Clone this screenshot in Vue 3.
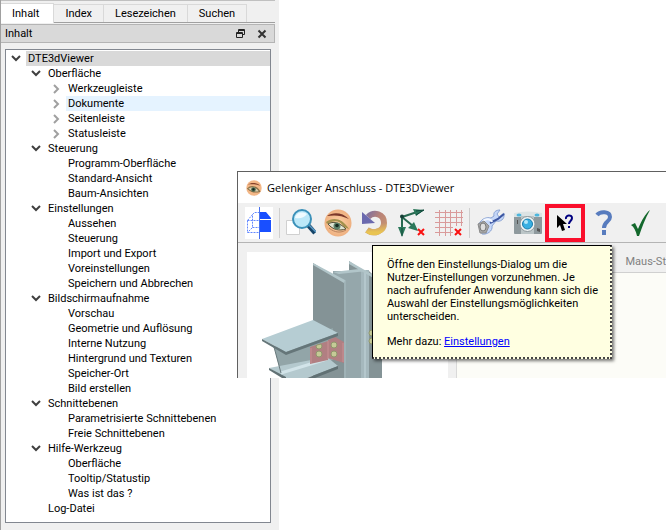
<script setup>
import { ref } from 'vue'

const tabs = ['Inhalt', 'Index', 'Lesezeichen', 'Suchen']
const active = ref(0)

const rows = [
  [0, 'DTE3dViewer', 'open', 'selected'],
  [1, 'Oberfläche', 'open'],
  [2, 'Werkzeugleiste', 'closed'],
  [2, 'Dokumente', 'closed', 'hovered'],
  [2, 'Seitenleiste', 'closed'],
  [2, 'Statusleiste', 'closed'],
  [1, 'Steuerung', 'open'],
  [2, 'Programm-Oberfläche'],
  [2, 'Standard-Ansicht'],
  [2, 'Baum-Ansichten'],
  [1, 'Einstellungen', 'open'],
  [2, 'Aussehen'],
  [2, 'Steuerung'],
  [2, 'Import und Export'],
  [2, 'Voreinstellungen'],
  [2, 'Speichern und Abbrechen'],
  [1, 'Bildschirmaufnahme', 'open'],
  [2, 'Vorschau'],
  [2, 'Geometrie und Auflösung'],
  [2, 'Interne Nutzung'],
  [2, 'Hintergrund und Texturen'],
  [2, 'Speicher-Ort'],
  [2, 'Bild erstellen'],
  [1, 'Schnittebenen', 'open'],
  [2, 'Parametrisierte Schnittebenen'],
  [2, 'Freie Schnittebenen'],
  [1, 'Hilfe-Werkzeug', 'open'],
  [2, 'Oberfläche'],
  [2, 'Tooltip/Statustip'],
  [2, 'Was ist das ?'],
  [1, 'Log-Datei'],
].map(([level, label, state, mark]) => ({ level, label, state, mark }))
</script>

<template>
  <main class="page">
    <aside class="dock">
      <nav class="tabs" role="tablist">
        <button
          v-for="(tab, i) in tabs"
          :key="tab"
          class="tab"
          :class="{ active: active === i }"
          role="tab"
          :aria-selected="active === i"
          @click="active = i"
        >{{ tab }}</button>
      </nav>
      <header class="dock-title">
        <span class="dock-name">Inhalt</span>
        <button class="dock-button" aria-label="Abdocken">
          <svg width="10" height="10" viewBox="0 0 10 10" fill="none" stroke="#222">
            <path d="M2.500 3V.5H8.500V5.500H7M2 1.500H9" />
            <path d="M.5 3.500H6.500V8.500H.5ZM0 4.500H7" />
          </svg>
        </button>
        <button class="dock-button" aria-label="Schließen">
          <svg width="10" height="10" viewBox="0 0 10 10" fill="none" stroke="#333" stroke-width="2">
            <path d="M1.500 1.500 8.500 8.500M8.500 1.500 1.500 8.500" />
          </svg>
        </button>
      </header>
      <ul class="tree" role="tree">
        <li v-for="(row, i) in rows" :key="i" class="row" :class="'level-' + row.level" role="treeitem">
          <span class="twisty">
            <svg v-if="row.state === 'open'" width="10" height="8" viewBox="0 0 10 8" fill="none" stroke="#404040" stroke-width="2">
              <path d="M1 1 5 5 9 1" />
            </svg>
            <svg v-else-if="row.state === 'closed'" width="8" height="10" viewBox="0 0 8 10" fill="none" stroke="#a0a0a0" stroke-width="2">
              <path d="M2 1 6 5 2 9" />
            </svg>
          </span>
          <span class="label" :class="row.mark">{{ row.label }}</span>
        </li>
      </ul>
    </aside>

    <section class="window">
      <header class="caption">
        <svg width="16" height="16" viewBox="0 0 28 28">
          <circle cx="14" cy="14" r="13.500" fill="#f3b787" />
          <path d="M3 8C9 4 18 4 25 10 17 7 10 7 3 8Z" fill="#84402a" />
          <path d="M3 15C8 10 18 10 24 20 17 22 9 21 3 15Z" fill="#d8ceb0" stroke="#8a7048" stroke-width="2" />
          <circle cx="13" cy="16.500" r="4" fill="#47684f" />
          <circle cx="13" cy="16.500" r="2" fill="#13211c" />
        </svg>
        <h1>Gelenkiger Anschluss - DTE3DViewer</h1>
      </header>

      <div class="toolbar" role="toolbar">
        <button class="tool" aria-label="Ansicht">
          <svg width="28" height="32" viewBox="0 0 28 32">
            <path d="M0 0H28V32H0Z" fill="#fff" />
            <path d="M2.500 13.500H14M2.500 13.500V25.500H14M2.500 13.500 7.500 7.500V20.500L2.500 25.500M7.500 20.500H14M7.500 7.500 9.500 5.500H14" fill="none" stroke="#6388ff" stroke-dasharray="2 1" />
            <path d="M15 5H21L26 11V12H15ZM15 13H26V25H15Z" fill="#194fff" />
            <path d="M14.500 0V32" stroke="#4771ee" />
          </svg>
        </button>
        <span class="divider"></span>
        <button class="tool" aria-label="Zoom">
          <svg width="30" height="30" viewBox="0 0 30 30">
            <path d="M.5 12.500H13.500V26.500H.5Z" fill="#fff" stroke="#d0d0d0" />
            <path d="M22 17 29 25" stroke="#164568" stroke-width="4.500" />
            <path d="M23 17 30 24" stroke="#5c9bc6" stroke-width="1.500" />
            <circle cx="16" cy="11" r="9" fill="#bce8f8" stroke="#3b91b9" stroke-width="2" />
            <path d="M9 10C10 5 15 3 21 6 18 10 14 11 9 10Z" fill="#effbff" />
          </svg>
        </button>
        <button class="tool" aria-label="Ansichtspunkt">
          <svg width="28" height="28" viewBox="0 0 28 28">
            <defs>
              <radialGradient id="skin">
                <stop offset="0" stop-color="#ffd4a8" />
                <stop offset="1" stop-color="#eeb080" />
              </radialGradient>
            </defs>
            <circle cx="14" cy="14" r="13.500" fill="url(#skin)" />
            <path d="M3 7C9 3 18 3 25 10 17 6 10 6 3 7Z" fill="#7c392b" />
            <path d="M2 13C9 8 18 9 25 20L20 18C15 10 9 12 3 15Z" fill="#a2914c" />
            <path d="M4 15C9 12 15 13 22 20 15 22 9 21 4 15Z" fill="#dfe4d3" stroke="#57533a" stroke-width="1" />
            <circle cx="13" cy="17" r="3.500" fill="#5b8069" />
            <circle cx="13" cy="16.500" r="1.800" fill="#152a21" />
            <path d="M5 19C11 24 17 24 22 21" fill="none" stroke="#b9825c" />
          </svg>
        </button>
        <button class="tool" aria-label="Rückgängig">
          <svg width="26" height="26" viewBox="0 0 26 26">
            <defs>
              <linearGradient id="undo" x1="0" y1="0" x2="25" y2="16" gradientUnits="userSpaceOnUse">
                <stop offset="0" stop-color="#6468b4" />
                <stop offset=".6" stop-color="#b98378" />
                <stop offset="1" stop-color="#c79370" />
              </linearGradient>
              <linearGradient id="gold" x1="0" y1="0" x2="0" y2="26" gradientUnits="userSpaceOnUse">
                <stop offset=".5" stop-color="#e9c452" stop-opacity="0" />
                <stop offset=".85" stop-color="#e9c452" />
              </linearGradient>
            </defs>
            <path d="M6 7C12 1 22 4 22 13 22 21 12 25 5 20" fill="none" stroke="url(#undo)" stroke-width="6" />
            <path d="M6 7C12 1 22 4 22 13 22 21 12 25 5 20" fill="none" stroke="url(#gold)" stroke-width="6" />
            <path d="M0 2V14L13 13Z" fill="#6b69ae" />
          </svg>
        </button>
        <button class="tool" aria-label="Achsen ausblenden">
          <svg width="28" height="30" viewBox="0 0 28 30">
            <path d="M4 9V22M4 9 19 4M4 9 15 18" fill="none" stroke="#286951" stroke-width="2" />
            <path d="M15 1 26 2 18 8ZM0 19H8L4 29ZM16 14 20 23 10 20Z" fill="#2c785b" />
            <path d="M18 3 26 2 18 7M4 20V28" stroke="#11483b" fill="none" />
            <circle cx="4" cy="8.500" r="2" fill="#143f35" />
            <path d="M20 21 26 27M26 21 20 27" stroke="#fa1111" stroke-width="2" />
          </svg>
        </button>
        <button class="tool" aria-label="Raster ausblenden">
          <svg width="28" height="28" viewBox="0 0 28 28">
            <path d="M4.500 1V27M10.500 1V27M15.500 1V27M21.500 1V17M26.500 1V17M0 3.500H28M0 8.500H28M0 13.500H28M0 18.500H18M0 23.500H18" fill="none" stroke="#d99a9a" />
            <path d="M20 20 26 26M26 20 20 26" stroke="#fa1111" stroke-width="2" />
          </svg>
        </button>
        <span class="divider"></span>
        <button class="tool" aria-label="Einstellungen">
          <svg width="28" height="28" viewBox="0 0 28 28">
            <path d="M2 15C5 9 10 8 14 9L17 7C16 3 19 1 23 1L20 5 22 8 27 4C28 11 23 13 19 12L15 17C16 22 10 26 5 25Z" fill="#c5d7f8" stroke="#8aa3d3" />
            <path d="M13 14 21 10 27 5" stroke="#3c55a0" stroke-width="2" fill="none" />
            <path d="M6 12C9 9 14 10 15 13" stroke="#f4f8ff" stroke-width="2" fill="none" />
            <path d="M1 15 7 12 12 17 9 24 3 24Z" fill="#a7a7a7" stroke="#8a8a8a" />
            <ellipse cx="6" cy="18" rx="3" ry="4" fill="#dedede" stroke="#777" />
          </svg>
        </button>
        <button class="tool" aria-label="Bildschirmaufnahme">
          <svg width="28" height="24" viewBox="0 0 28 24">
            <path d="M0 2Q14-1 28 2V22Q28 23 27 23H1Q0 23 0 22Z" fill="#dce3e4" />
            <path d="M0 6H28V22Q28 23 27 23H1Q0 23 0 22Z" fill="#8e999d" />
            <path d="M7 5H20V23H7Z" fill="#bbc5c7" />
            <circle cx="13.500" cy="13" r="7.500" fill="#f1f5f5" stroke="#8d989c" />
            <circle cx="13.500" cy="13" r="5" fill="#38afe2" stroke="#187cac" />
            <circle cx="12" cy="11" r="2" fill="#b3e7f8" />
            <ellipse cx="5" cy="4" rx="2.500" ry="1.500" fill="#4bb6dd" />
            <ellipse cx="23" cy="4" rx="2.500" ry="1.500" fill="#4bb6dd" />
            <path d="M3.500 9V13" stroke="#555" />
            <path d="M23 17 26 18V21L23 20Z" fill="#555" />
          </svg>
        </button>
        <button class="tool marked" aria-label="Was ist das">
          <svg width="18" height="18" viewBox="0 0 18 18">
            <path d="M1 1V14L4 11 6 17 9 16 7 10H11Z" fill="#000" />
            <path d="M10 5C9 1 16 0 16 4 16 7 13 7 13 10" fill="none" stroke="#000080" stroke-width="2" />
            <path d="M12 12H14V14H12Z" fill="#000080" />
          </svg>
        </button>
        <button class="tool" aria-label="Hilfe">
          <svg width="18" height="26" viewBox="0 0 18 26">
            <path d="M2 5C5 1 15 1 15 7 15 12 9 11 9 18" fill="none" stroke="#587cbe" stroke-width="4" />
            <path d="M7 20H11V25H7Z" fill="#587cbe" />
          </svg>
        </button>
        <button class="tool" aria-label="Übernehmen">
          <svg width="20" height="26" viewBox="0 0 20 26">
            <path d="M0 15 4 13 7 19C11 10 14 4 19 0 14 9 11 17 8 26H6C5 21 3 17 0 15Z" fill="#13682c" />
          </svg>
        </button>
      </div>

      <div class="body">
        <figure class="viewport">
          <svg width="201" height="126" viewBox="0 0 201 126">
            <path d="M102 9 135 32V126H102Z" fill="#849396" />
            <path d="M86 19H114V126H86Z" fill="#95a7ab" />
            <path d="M114 18H122V126H114Z" fill="#a5b8bd" />
            <path d="M117 18H119V126H117Z" fill="#b4c7cc" />
            <path d="M122 19 135 32V126H122Z" fill="#849396" />
            <path d="M66 11 97 30V126H66Z" fill="#849396" />
            <path d="M97 28H99V126H97Z" fill="#9fb2b6" />
            <path d="M66 11 98 28 97 31 66 13ZM102 9 135 28V31L102 12ZM86 20 112 17 120 19 92 22Z" fill="#b1c5c9" />
            <path d="M27 95 86 76V108L34 122Z" fill="#92a5a8" />
            <path d="M22 116 80 105 91 114 60 126H38Z" fill="#b4c9ce" />
            <path d="M22 116 39 125V126H35L22 118ZM91 114V117L68 126H60Z" fill="#617174" />
            <path d="M34 121 80 107" stroke="#d2e4e9" stroke-width="3" />
            <path d="M27 95 34 121" stroke="#69797c" />
            <path d="M63 95 81 89V108L63 112ZM81 88 88 85 97 90V111L81 106Z" fill="#b17f82" />
            <path d="M81 89V107M64 96V111M96 91V110" stroke="#c99194" />
            <path d="M15 87 66 68 91 81 39 100Z" fill="#b6cdd3" />
            <path d="M15 87 39 100V103L15 89ZM39 100 91 81V84L39 103Z" fill="#657679" />
            <g fill="#c5ca96" stroke="#8f966c">
              <path d="M69 94A3 3 0 0 0 75 94L74 92 70 93Z" />
              <circle cx="87" cy="93" r="3" />
              <circle cx="72" cy="102" r="3" /><circle cx="87" cy="102" r="3" />
              <circle cx="125" cy="81" r="3" /><circle cx="125" cy="89" r="3" />
            </g>
          </svg>
        </figure>
        <div class="panel">
          <span class="panel-tab">Maus-St</span>
          <div class="panel-page"></div>
        </div>
      </div>

      <div class="tooltip" role="tooltip">
        <p>Öffne den Einstellungs-Dialog um die<br />Nutzer-Einstellungen vorzunehmen. Je<br />nach aufrufender Anwendung kann sich die<br />Auswahl der Einstellungsmöglichkeiten<br />unterscheiden.</p>
        <p>Mehr dazu: <a href="#einstellungen">Einstellungen</a></p>
      </div>
    </section>
  </main>
</template>

<style>
body {
  margin: 0;
  background: #fff;
}
</style>

<style scoped>
.page {
  position: relative;
  display: flex;
  min-height: 100vh;
  overflow: hidden;
  font: 11px/15px Roboto, "Liberation Sans", sans-serif;
  color: #000;
}
button {
  margin: 0;
  padding: 0;
  border: 0;
  background: none;
  font: inherit;
  color: inherit;
}
svg {
  display: block;
}
.dock {
  box-sizing: border-box;
  flex: 0 0 279px;
  display: flex;
  flex-direction: column;
  padding: 0 4px 7px 0;
  border-left: 1px solid #a0a0a0;
  background: #f0f0f0;
}
.tabs {
  display: flex;
  align-items: flex-end;
  height: 20px;
  padding-top: 1px;
  border-top: 1px solid #c0c0c0;
  border-bottom: 1px solid #a0a0a0;
  margin-bottom: 1px;
}
.tab {
  height: 18px;
  padding: 0 11px;
  border: 1px solid #d9d9d9;
  border-left: 0;
  border-bottom: 0;
}
.tab.active {
  height: 20px;
  margin-bottom: -1px;
  padding-right: 14px;
  background: #fff;
}
.dock-title {
  display: flex;
  align-items: center;
  gap: 11px;
  height: 17px;
  padding: 0 7px 0 4px;
  border: 1px solid #b4b4b4;
  border-left: 0;
  background: #d9d9d9;
}
.dock-name {
  flex: 1;
}
.tree {
  flex: 1;
  margin: 6px 4px 0;
  padding: 1px 0 0;
  border: 1px solid #828790;
  background: #fff;
  list-style: none;
}
.row {
  display: flex;
  height: 15px;
}
.level-1 {
  padding-left: 20px;
}
.level-2 {
  padding-left: 40px;
}
.twisty {
  flex: 0 0 20px;
  display: grid;
  place-items: center;
}
.label {
  flex: 1;
  padding-left: 2px;
  white-space: nowrap;
}
.selected {
  background: #d9d9d9;
}
.hovered {
  background: #e5f3ff;
}
.window {
  position: absolute;
  left: 237px;
  top: 171px;
  right: 0;
  border-top: 1px solid #606060;
  border-left: 1px solid #606060;
  background: #f0f0f0;
}
.caption {
  display: flex;
  align-items: center;
  gap: 5px;
  height: 31px;
  padding-left: 8px;
  background: #fff;
}
.caption h1 {
  margin: 0;
  font: 11px/16px "Open Sans", "Noto Sans", sans-serif;
}
.toolbar {
  display: flex;
  align-items: center;
  height: 39px;
  padding-left: 2px;
  border-bottom: 1px solid #b4b4b4;
}
.tool {
  flex: none;
  display: grid;
  place-items: center;
  width: 37px;
}
.divider {
  width: 1px;
  height: 30px;
  margin: 0 2px;
  background: #cfcfcf;
}
.marked {
  box-sizing: border-box;
  width: 40px;
  height: 38px;
  margin-left: -1px;
  border: 4px solid #fa0f2c;
}
.body {
  display: flex;
  gap: 8px;
  padding: 9px 0 0 9px;
}
.viewport {
  flex: none;
  margin: 0;
  background: #fff;
}
.panel {
  flex: 1;
  display: flex;
  flex-direction: column;
  border-left: 1px solid #d9d9d9;
}
.panel-tab {
  align-self: flex-end;
  padding: 2px 0 3px;
  color: #808080;
  white-space: nowrap;
}
.panel-page {
  flex: 1;
  border-top: 1px solid #d0d0d0;
  background: #fcfcf7;
}
.tooltip {
  position: absolute;
  left: 134px;
  top: 73px;
  box-sizing: border-box;
  width: 240px;
  padding: 12px 14px 9px;
  border: 1px solid #000;
  border-right: 2px dotted #444;
  border-bottom: 2px dotted #444;
  background: #ffffe1;
  box-shadow: 2px 2px 3px #0008;
  line-height: 13px;
  white-space: nowrap;
}
.tooltip p {
  margin: 0;
}
.tooltip p + p {
  margin-top: 12px;
}
.tooltip a {
  color: #0000ff;
}
</style>
